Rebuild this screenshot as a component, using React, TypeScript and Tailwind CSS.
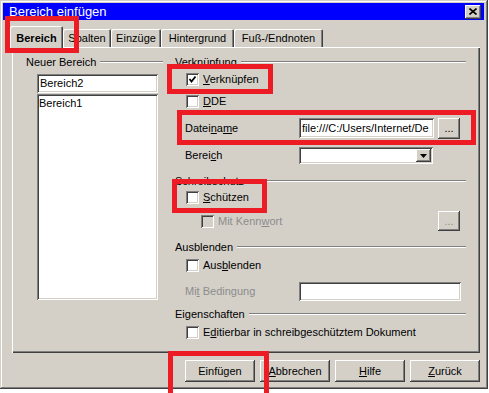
import type { ReactNode } from 'react'

const sunken =
  'shadow-[inset_1px_1px_0_#808080,inset_-1px_-1px_0_#fff,inset_2px_2px_0_#404040,inset_-2px_-2px_0_#d4d0c8]'
const raised =
  'shadow-[inset_-1px_-1px_0_#404040,inset_1px_1px_0_#fff,inset_-2px_-2px_0_#808080,inset_2px_2px_0_#d4d0c8]'

function U({ children }: { children: ReactNode }) {
  return <span className="underline underline-offset-[1px]">{children}</span>
}

function GroupLabel({ children }: { children: ReactNode }) {
  return (
    <div className="flex h-[14px] items-center">
      <span className="whitespace-nowrap">{children}</span>
      <span className="ml-[4px] h-0 flex-1 border-t border-b border-t-[#808080] border-b-white" />
    </div>
  )
}

function Check({ checked, disabled }: { checked?: boolean; disabled?: boolean }) {
  return (
    <span
      className={[
        'relative inline-block h-[13px] w-[13px] shrink-0',
        disabled ? 'bg-[#d4d0c8]' : 'bg-white',
        sunken,
      ].join(' ')}
    >
      {checked && (
        <svg className="absolute left-0 top-0" width="13" height="13" viewBox="0 0 13 13">
          <polyline points="3.5,6 5.5,8.5 9.5,3.5" fill="none" stroke="#000" strokeWidth="1.8" />
        </svg>
      )}
    </span>
  )
}

function CheckRow({
  children,
  checked,
  disabled,
  className = '',
}: {
  children: ReactNode
  checked?: boolean
  disabled?: boolean
  className?: string
}) {
  return (
    <div className={`flex h-[14px] items-center gap-[4px] ${className}`}>
      <Check checked={checked} disabled={disabled} />
      <span className={disabled ? 'text-[#8c8c8c]' : ''}>{children}</span>
    </div>
  )
}

function Button({ children, className = '' }: { children: ReactNode; className?: string }) {
  return (
    <div className={`flex items-center justify-center bg-[#d4d0c8] ${raised} ${className}`}>
      {children}
    </div>
  )
}

function Tab({ label, width }: { label: string; width: string }) {
  return (
    <div
      className={`mb-[1px] flex h-[18px] items-center justify-center rounded-t-[2px] ${width} shadow-[inset_1px_1px_0_#fff,inset_-1px_0_0_#404040,inset_-2px_0_0_#808080]`}
    >
      {label}
    </div>
  )
}

function Marker({ className }: { className: string }) {
  return <div className={`pointer-events-none absolute border-[5px] border-[#ed1c24] ${className}`} />
}

export default function App() {
  return (
    <div className="relative h-[393px] w-[489px] overflow-hidden bg-white font-['Liberation_Sans',Arial,sans-serif] text-[11px] leading-[13px] text-black">
      <div className="h-[389px] w-[488px] bg-[#d4d0c8] p-[3px] shadow-[inset_-1px_-1px_0_#404040,inset_1px_1px_0_#d4d0c8,inset_-2px_-2px_0_#808080,inset_2px_2px_0_#fff]">
        {/* title bar */}
        <div className="flex h-[17px] w-[481px] items-center bg-[#0000ff] pl-[6px] text-white">
          <span className="text-[13px] leading-[15px]">Bereich einfügen</span>
          <div className={`ml-auto mr-[3px] flex h-[14px] w-[16px] items-center justify-center bg-[#d4d0c8] ${raised}`}>
            <svg width="8" height="7" viewBox="0 0 8 7">
              <path d="M0.5 0.5 L7.5 6.5 M7.5 0.5 L0.5 6.5" stroke="#000" strokeWidth="1.6" />
            </svg>
          </div>
        </div>

        {/* tabs */}
        <div className="mt-[6px] flex h-[22px] items-end pl-[7px]">
          <div className="relative z-10 flex h-[22px] w-[53px] items-start justify-center rounded-t-[2px] bg-[#d4d0c8] pt-[6px] font-bold shadow-[inset_1px_1px_0_#fff,inset_-1px_0_0_#404040,inset_-2px_0_0_#808080]">
            Bereich
          </div>
          <Tab label="Spalten" width="w-[48px]" />
          <Tab label="Einzüge" width="w-[50px]" />
          <Tab label="Hintergrund" width="w-[73px]" />
          <Tab label="Fuß-/Endnoten" width="w-[89px]" />
        </div>

        {/* panel */}
        <div className="-mt-[1px] ml-[9px] flex h-[306px] w-[468px] pl-[14px] pt-[8px] shadow-[inset_1px_1px_0_#fff,inset_-1px_-1px_0_#404040,inset_-2px_-2px_0_#808080]">
          <div className="w-[137px]">
            <GroupLabel>Neuer Bereich</GroupLabel>
            <div className={`ml-[11px] mt-[5px] flex h-[19px] w-[121px] items-center bg-white pl-[3px] ${sunken}`}>
              Bereich2
            </div>
            <div className={`ml-[11px] mt-[1px] h-[206px] w-[121px] bg-white pl-[2px] pt-[3px] ${sunken}`}>
              Bereich1
            </div>
          </div>

          <div className="ml-[12px] w-[291px]">
            <GroupLabel>Verknüpfung</GroupLabel>
            <CheckRow checked className="ml-[11px] mt-[3px]">
              <U>V</U>erknüpfen
            </CheckRow>
            <CheckRow className="ml-[11px] mt-[8px]">
              <U>D</U>DE
            </CheckRow>

            <div className="ml-[10px] mt-[10px] flex h-[20px] items-center">
              <span className="w-[114px]">
                Datei<U>n</U>a<U>m</U>e
              </span>
              <div className={`flex h-[20px] w-[135px] items-center whitespace-nowrap bg-white pl-[3px] ${sunken}`}>
                file:///C:/Users/Internet/De
              </div>
              <Button className="ml-[4px] h-[21px] w-[22px]">...</Button>
            </div>

            <div className="ml-[10px] mt-[9px] flex h-[17px] items-center">
              <span className="w-[114px]">
                Berei<U>c</U>h
              </span>
              <div className={`flex h-[17px] w-[134px] items-center justify-end bg-white p-[2px] ${sunken}`}>
                <div className={`flex h-[13px] w-[15px] items-center justify-center bg-[#d4d0c8] ${raised}`}>
                  <svg width="7" height="4" viewBox="0 0 7 4">
                    <path d="M0 0 H7 L3.5 4 Z" fill="#000" />
                  </svg>
                </div>
              </div>
            </div>

            <div className="mt-[10px]">
              <GroupLabel>Schreibschutz</GroupLabel>
            </div>
            <CheckRow className="ml-[11px] mt-[2px]">
              <U>S</U>chützen
            </CheckRow>
            <div className="mt-[7px] flex h-[20px] items-center">
              <CheckRow disabled className="ml-[26px]">
                Mit Kenn<U>w</U>ort
              </CheckRow>
              <Button className="ml-auto mr-[6px] h-[20px] w-[22px] text-[#8c8c8c]">...</Button>
            </div>

            <div className="mt-[9px]">
              <GroupLabel>Ausblenden</GroupLabel>
            </div>
            <CheckRow className="ml-[11px] mt-[4px]">
              Aus<U>b</U>lenden
            </CheckRow>
            <div className="ml-[10px] mt-[10px] flex h-[19px] items-center">
              <span className="w-[114px] text-[#8c8c8c]">
                Mi<U>t</U> Bedingung
              </span>
              <div className={`h-[19px] w-[162px] bg-white ${sunken}`} />
            </div>

            <div className="mt-[6px]">
              <GroupLabel>Eigenschaften</GroupLabel>
            </div>
            <CheckRow className="ml-[11px] mt-[4px]">
              E<U>d</U>itierbar in schreibgeschütztem Dokument
            </CheckRow>
          </div>
        </div>

        {/* buttons */}
        <div className="mt-[7px] flex justify-end gap-[5px] pr-[5px]">
          <Button className="h-[22px] w-[70px]">Einfügen</Button>
          <Button className="h-[22px] w-[70px]">
            <U>A</U>bbrechen
          </Button>
          <Button className="h-[22px] w-[70px]">
            <U>H</U>ilfe
          </Button>
          <Button className="h-[22px] w-[70px]">
            <U>Z</U>urück
          </Button>
        </div>
      </div>

      <Marker className="left-[5px] top-[16px] h-[37px] w-[74px]" />
      <Marker className="left-[167px] top-[64px] h-[30px] w-[106px]" />
      <Marker className="left-[177px] top-[110px] h-[35px] w-[299px]" />
      <Marker className="left-[172px] top-[179px] h-[34px] w-[95px]" />
      <Marker className="left-[168px] top-[351px] h-[50px] w-[101px]" />
    </div>
  )
}
